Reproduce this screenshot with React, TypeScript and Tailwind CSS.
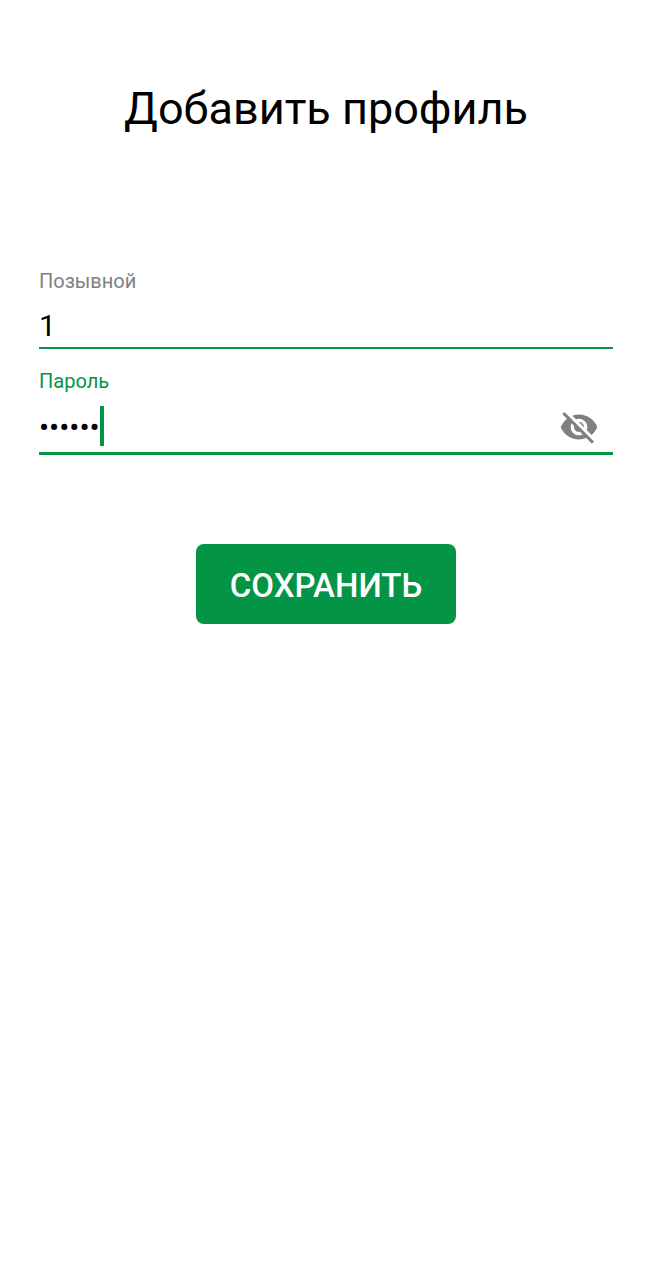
import { useState } from 'react';
import { MdVisibility, MdVisibilityOff } from 'react-icons/md';

export default function App() {
  const [callSign, setCallSign] = useState('1');
  const [password, setPassword] = useState('123456');
  const [showPassword, setShowPassword] = useState(false);

  return (
    <main className="min-h-screen bg-white pt-[81px] pr-10 pl-[39px] font-['Roboto',sans-serif] text-black">
      <h1 className="text-center text-[45px] leading-[56px]">Добавить профиль</h1>

      <form className="mt-[130px] flex flex-col" onSubmit={(e) => e.preventDefault()}>
        {/* Позывной */}
        <label htmlFor="callSign" className="text-[20px] leading-7 text-[#808080]">
          Позывной
        </label>
        <input
          id="callSign"
          type="text"
          value={callSign}
          onChange={(e) => setCallSign(e.target.value)}
          className="h-[54px] w-full border-b-2 border-[#049445] pt-2 text-[30px] outline-none"
        />

        {/* Пароль */}
        <label htmlFor="password" className="mt-[18px] text-[20px] leading-7 text-[#049445]">
          Пароль
        </label>
        <div className="relative flex h-[60px] items-center border-b-3 border-[#049445] pt-1">
          <input
            id="password"
            type={showPassword ? 'text' : 'password'}
            value={password}
            onChange={(e) => setPassword(e.target.value)}
            className="h-10 min-w-0 flex-1 pt-1 text-[30px] caret-[#049445] outline-none"
          />
          {/* Курсор */}
          <span className="absolute left-[61px] h-10 w-1 bg-[#049445]" />
          <button
            type="button"
            aria-label="Показать пароль"
            onClick={() => setShowPassword(!showPassword)}
            className="mr-3.5 pt-0.5 text-[#808080]"
          >
            {showPassword ? <MdVisibility size={40} /> : <MdVisibilityOff size={40} />}
          </button>
        </div>

        <button
          type="submit"
          className="mt-[89px] h-20 w-65 self-center rounded-lg bg-[#049445] pt-1 text-[33px] font-medium text-white"
        >
          СОХРАНИТЬ
        </button>
      </form>
    </main>
  );
}
